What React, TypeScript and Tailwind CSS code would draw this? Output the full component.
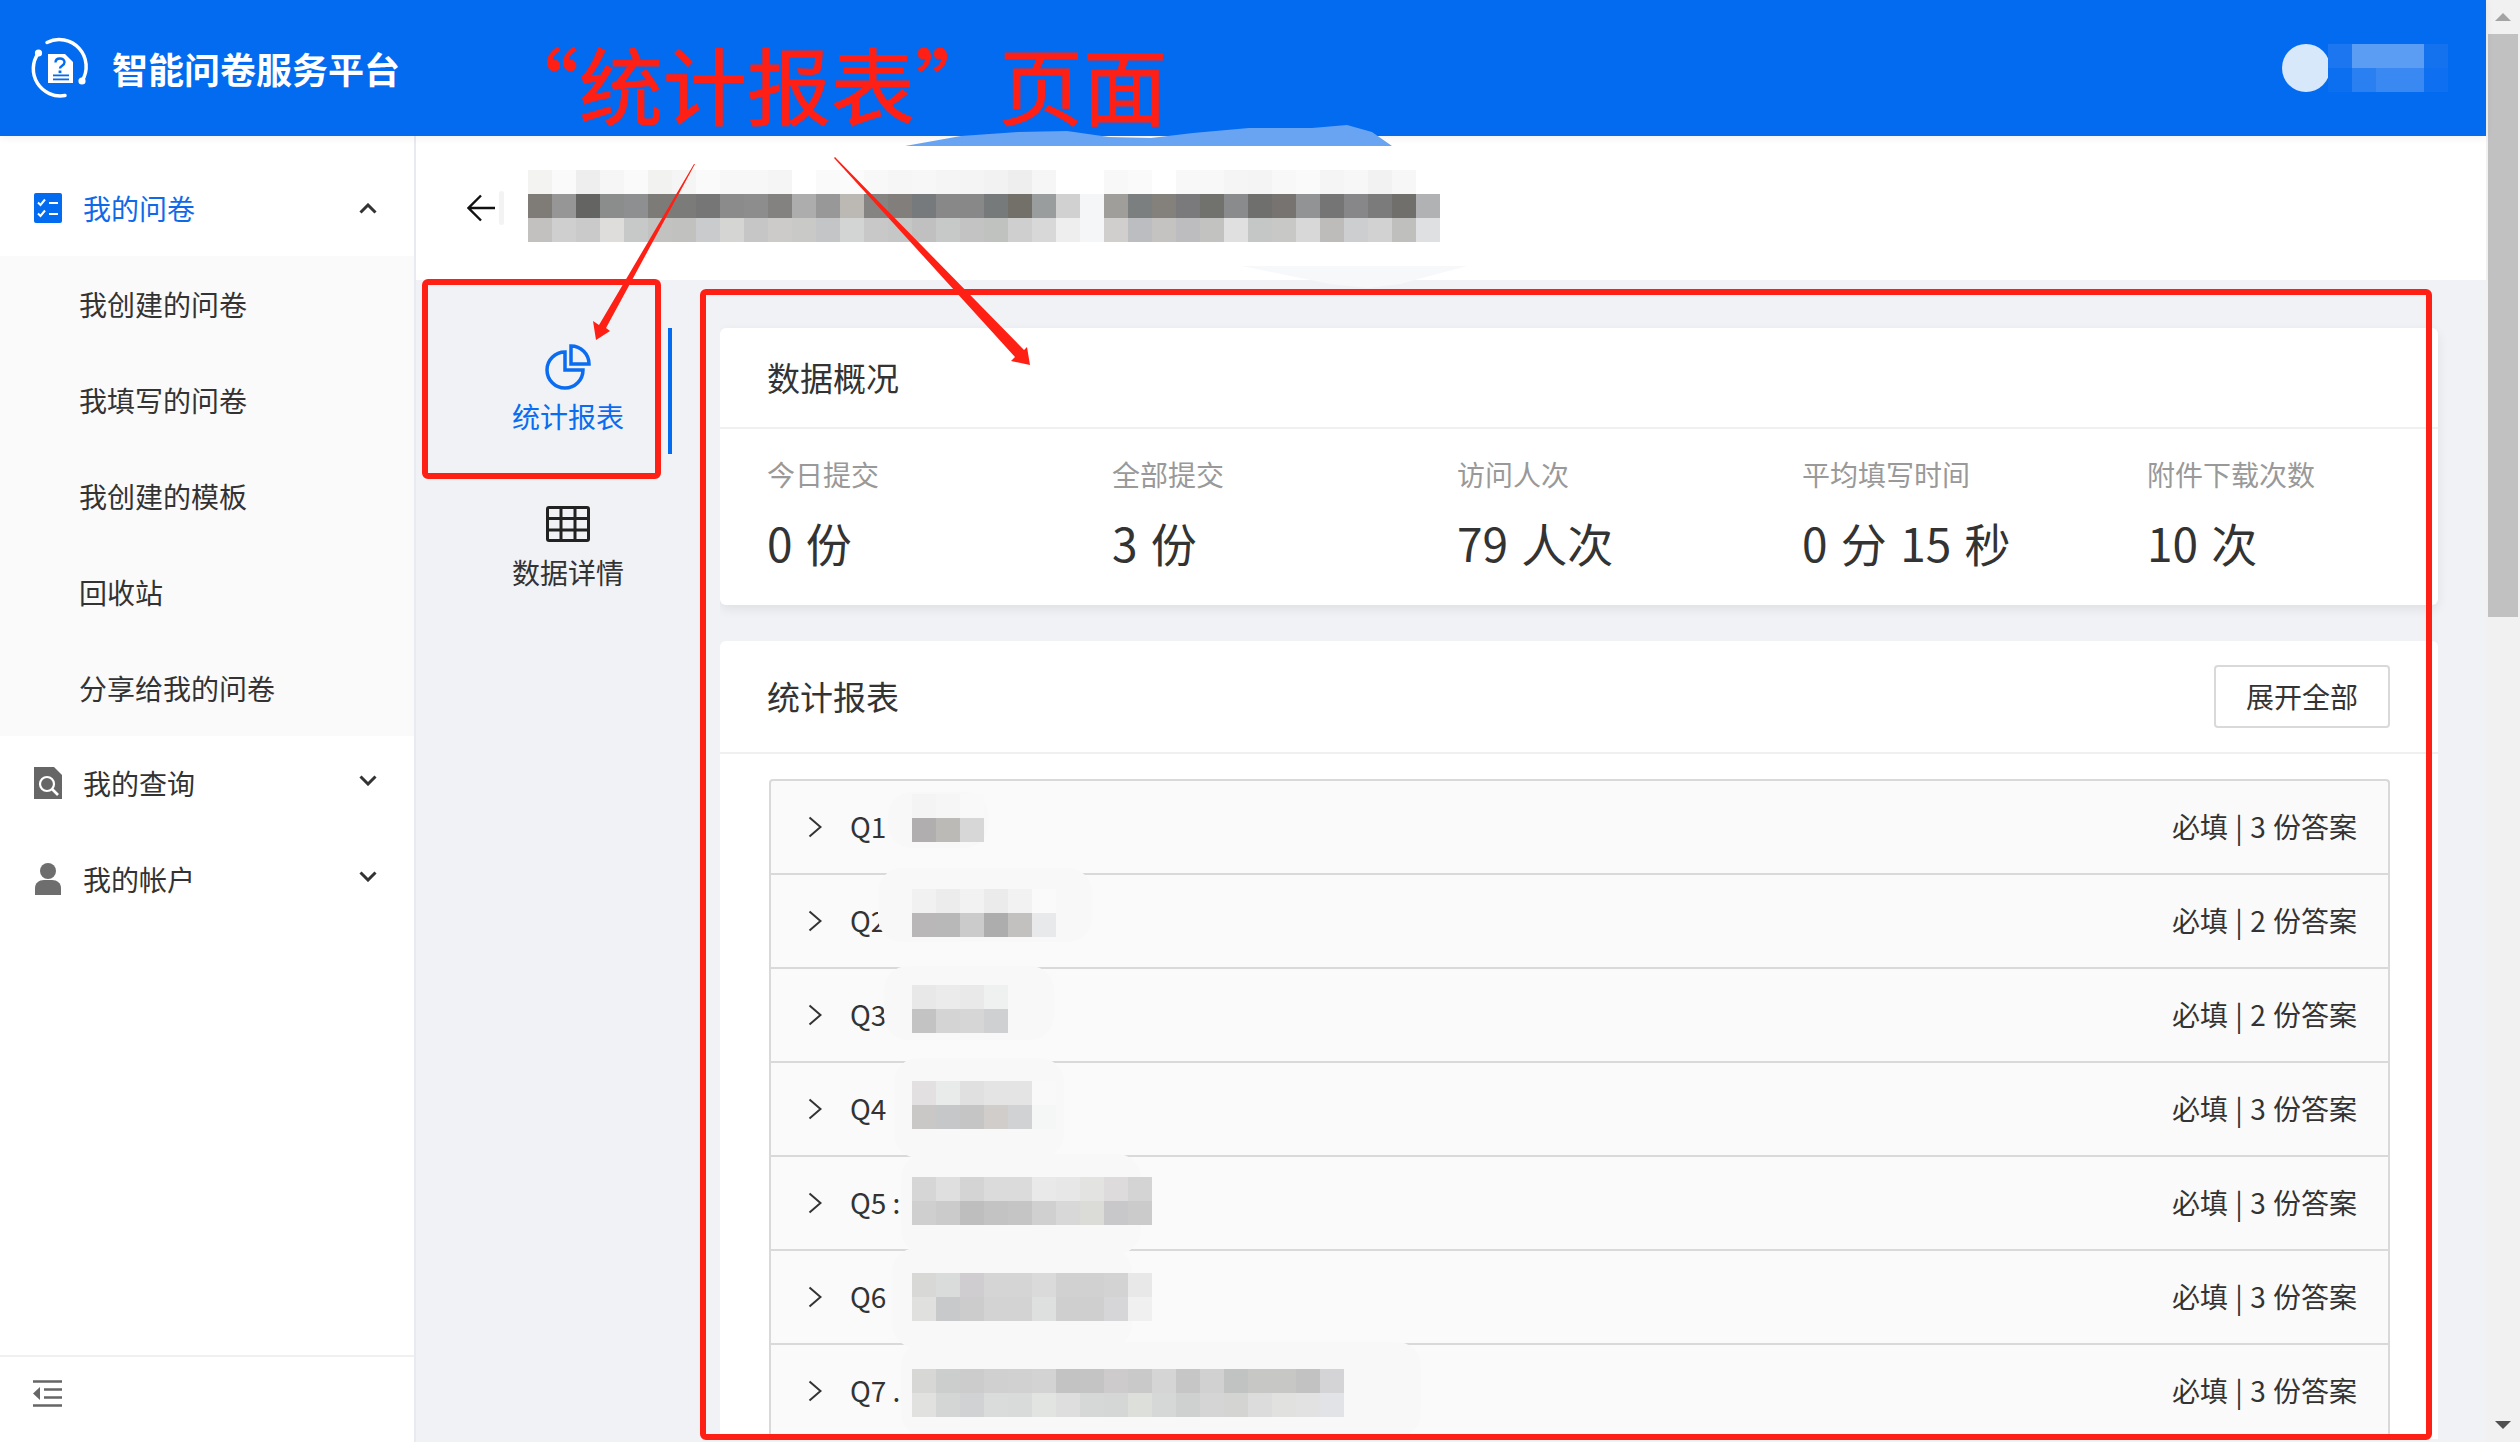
import React from 'react';

const titleMosaicA = [
  ['#f3f3f2', '#fafafa', '#eeeeee', '#f6f6f6', '#fafafa', '#f2f2f0', '#f5f5f5', '#fafafa', '#f7f7f7', '#f7f7f7', '#f5f5f5', '#ffffff', '#fafafa', '#fbfbfb', '#f8f8f8', '#f6f6f6', '#f7f7f7', '#f5f5f5', '#f3f4f3', '#f2f2f2', '#eeeeee', '#f6f6f6', '#ffffff'],
  ['#7f7b77', '#969696', '#646462', '#8b8c8c', '#8e8f90', '#7d7b78', '#7b7b79', '#767676', '#8b8b8c', '#8d8d8d', '#838280', '#adadad', '#989898', '#bcb9b4', '#858483', '#817e7c', '#777a7c', '#888888', '#888888', '#777a7a', '#727069', '#9a9d9d', '#d1d1d1'],
  ['#c3c1bf', '#cfcfcf', '#c9cac9', '#dfdddb', '#c7c8c8', '#c2c2c0', '#c1c1bf', '#c9cbcc', '#d5d5d3', '#c5c6c5', '#cdcbca', '#c9c9c7', '#c4c5c6', '#d3d5d5', '#c8c8c8', '#c4c7c6', '#c0c0c0', '#c7c8c8', '#c2c3c2', '#c0c2c0', '#cfcfcf', '#d8d8d8', '#eeeeee'],
];

const titleMosaicB = [
  ['#f8f8f8', '#fafafa', '#ffffff', '#f8f8f8', '#f8f8f8', '#f5f5f5', '#f4f4f4', '#f8f8f8', '#fafafa', '#f5f5f5', '#f7f7f7', '#f1f2f1', '#f7f7f7', '#ffffff'],
  ['#a09e9a', '#7c7f7f', '#84817d', '#7a7a7d', '#71716d', '#8a8b8d', '#6f6f6e', '#777370', '#929394', '#757575', '#87878a', '#7b7b7b', '#706f6b', '#b0b2b4'],
  ['#d0cfcd', '#bcbdc0', '#c5c3c2', '#bdbdc0', '#c2c3c1', '#e0e0e0', '#c5c7c6', '#c8c8c7', '#d8d8d8', '#bdbcba', '#cdced0', '#d2d2d2', '#bfbfbd', '#dee0e2'],
];

const userMosaic = [
  ['#1b76f0', '#5a9df3', '#5a9df3', '#5a9df3', '#1472ef'],
  ['#0c6ff0', '#2a7ff1', '#3a89f2', '#3a89f2', '#0e6ff0'],
];

const stats = [
  { label: '今日提交', value: '0 份' },
  { label: '全部提交', value: '3 份' },
  { label: '访问人次', value: '79 人次' },
  { label: '平均填写时间', value: '0 分 15 秒' },
  { label: '附件下载次数', value: '10 次' },
];

const questions = [
  {
    label: 'Q1', meta: '必填 | 3 份答案', blockTop: 15,
    blocks: [['#f4f4f4', '#f6f6f6', '#f9f9f9'], ['#b0aeae', '#bbbab7', '#d7d7d8']],
  },
  {
    label: 'Q2', meta: '必填 | 2 份答案', blockTop: 16,
    blocks: [['#f1f1f1', '#ececec', '#f2f2f2', '#ebebeb', '#f2f2f2', '#fafafa'], ['#b9b7b7', '#b8b8b9', '#cacbca', '#adadad', '#c2c1bf', '#e8e9ea']],
  },
  {
    label: 'Q3', meta: '必填 | 2 份答案', blockTop: 18,
    blocks: [['#e8e8e8', '#ebebeb', '#e9e9e9', '#eff0f0'], ['#c3c3c3', '#d4d4d4', '#d6d6d6', '#ced0d1']],
  },
  {
    label: 'Q4', meta: '必填 | 3 份答案', blockTop: 20,
    blocks: [['#e2e0e0', '#e9eaea', '#e0e0e0', '#e4e4e4', '#e3e4e3', '#f8f9f8'], ['#c9c8c6', '#c6c7c8', '#c6c5c5', '#d0cdcb', '#d1d2d3', '#f5f7f6']],
  },
  {
    label: 'Q5 :', meta: '必填 | 3 份答案', blockTop: 22,
    blocks: [['#d6d6d6', '#dfdfdf', '#d4d4d4', '#dbdbdb', '#dbdbdb', '#e9e9e9', '#e7e7e7', '#e3e3e2', '#dddbdc', '#d4d4d4'], ['#cfcfcf', '#cbcbcb', '#bebebe', '#c3c3c3', '#c5c5c5', '#d0d0d0', '#d8d8d8', '#dbdcd8', '#c8c8ca', '#cbcbcb']],
  },
  {
    label: 'Q6', meta: '必填 | 3 份答案', blockTop: 24,
    blocks: [['#d8d8d7', '#dadbdb', '#cfcdcf', '#d5d5d5', '#d5d5d5', '#d9dad9', '#d1d1d1', '#d1d1d1', '#d3d3d3', '#e8e8e8'], ['#e0e1df', '#c8c9cb', '#cccccc', '#d3d3d3', '#d3d3d3', '#dee0df', '#cfcfcf', '#cfcfcf', '#d6d6d8', '#f0f0f0']],
  },
  {
    label: 'Q7 .', meta: '必填 | 3 份答案', blockTop: 26,
    blocks: [['#d7d7d5', '#cccecd', '#cccccc', '#d0d0d0', '#d1d1d1', '#d2d3d2', '#c3c3c3', '#c4c4c4', '#cdcbcb', '#c9c9c9', '#d5d5d5', '#c5c6c5', '#d1d1d1', '#c0c3c1', '#c7c7c5', '#c7c7c5', '#c2c2c2', '#d4d4d7'], ['#e1e2e0', '#d4d6d6', '#d0d2d3', '#dadcdb', '#d9dada', '#e2e4e2', '#dedede', '#d6d7d7', '#d5d7d6', '#dddfda', '#d6d8d8', '#cfd0d0', '#d5d5d5', '#d4d5d3', '#dcdcdc', '#e1e2e0', '#e2e2e2', '#e2e3e6']],
  },
];

// erased patches on the list, relative to the list box
const smudges = [
  { left: 117, top: 11, width: 100, height: 56 },
  { left: 107, top: 87, width: 214, height: 74 },
  { left: 113, top: 185, width: 170, height: 74 },
  { left: 123, top: 277, width: 170, height: 100 },
  { left: 130, top: 373, width: 240, height: 100 },
  { left: 121, top: 467, width: 240, height: 100 },
  { left: 130, top: 561, width: 520, height: 95 },
];

const Mosaic = ({ rows }: { rows: string[][] }) => (
  <div className="flex flex-col">
    {rows.map((row, i) => (
      <div key={i} className="flex h-[24px]">
        {row.map((color, j) => (
          <div key={j} className="h-[24px] w-[24px]" style={{ backgroundColor: color }}></div>
        ))}
      </div>
    ))}
  </div>
);

const Chevron = ({ up }: { up?: boolean }) => (
  <svg width="18" height="11" viewBox="0 0 18 11" className={up ? 'text-[#333333]' : '-mt-[6px] text-[#333333]'}>
    <path d={up ? 'M1.5 9.5L9 2l7.5 7.5' : 'M1.5 1.5L9 9l7.5-7.5'} fill="none" stroke="currentColor" strokeWidth="3" />
  </svg>
);

const Logo = () => (
  <svg width="90" height="75" viewBox="0 0 90 75" className="shrink-0">
    <path d="M18.5 22A27 27 0 0 0 45 64.5" fill="none" stroke="#fff" strokeWidth="3.5" strokeLinecap="round" />
    <path d="M27 11.5A27 27 0 0 1 62 50" fill="none" stroke="#fff" strokeWidth="3.5" strokeLinecap="round" />
    <circle cx="18.5" cy="22" r="3.6" fill="#fff" />
    <circle cx="62" cy="50" r="3.6" fill="#fff" />
    <path d="M28 23h17l8 8v21H28z" fill="#fff" />
    <path d="M47 22.5l6 6" stroke="#026bf0" strokeWidth="1.5" />
    <path d="M35.5 31.5c0-2.6 2-4 4.5-4s4.5 1.500 4.500 3.800c0 3.500-4.500 3.200-4.500 6.200" fill="none" stroke="#026bf0" strokeWidth="2.4" />
    <rect x="38.600" y="39.500" width="2.800" height="2.600" fill="#026bf0" />
    <rect x="33" y="43.500" width="16" height="1.800" fill="#026bf0" />
    <rect x="33" y="47.500" width="16" height="1.800" fill="#026bf0" />
  </svg>
);

const SurveyIcon = () => (
  <svg width="28" height="30" viewBox="0 0 28 30" className="shrink-0">
    <rect width="28" height="30" rx="2" fill="#026bf0" />
    <path d="M4 9.500l2.500 2.500L11 6.500M4 20.500l2.500 2.500L11 17.500" fill="none" stroke="#fff" strokeWidth="2" />
    <path d="M15 10h9M15 21h9" stroke="#fff" strokeWidth="2" />
  </svg>
);

const QueryIcon = () => (
  <svg width="28" height="32" viewBox="0 0 28 32" className="shrink-0">
    <path d="M0 0h20l8 8v24H0z" fill="#666666" />
    <circle cx="13" cy="17" r="7" fill="none" stroke="#fff" strokeWidth="2.200" />
    <path d="M18 22l6 6" stroke="#fff" strokeWidth="2.600" />
  </svg>
);

const UserIcon = () => (
  <svg width="28" height="32" viewBox="0 0 28 32" className="shrink-0">
    <circle cx="14" cy="8" r="8" fill="#6e6e6e" />
    <path d="M1 32v-7c0-5 4-8 9-8h8c5 0 9 3 9 8v7z" fill="#6e6e6e" />
  </svg>
);

const CollapseIcon = () => (
  <svg width="30" height="27" viewBox="0 0 30 27">
    <path d="M0 1.500h29M11 9.500h18M11 17.500h18M0 25.500h29" stroke="#666666" strokeWidth="2.400" />
    <path d="M7 7v13L0 13.500z" fill="#666666" />
  </svg>
);

const PieIcon = () => (
  <svg width="56" height="52" viewBox="0 0 56 52">
    <path d="M25 10A18 18 0 1 0 43 28H25z" fill="none" stroke="#0a6cf0" strokeWidth="3.500" />
    <path d="M31 4A18 18 0 0 1 49 22H31z" fill="none" stroke="#0a6cf0" strokeWidth="3.500" />
  </svg>
);

const TableIcon = () => (
  <svg width="44" height="36" viewBox="0 0 44 36">
    <rect x="1.500" y="1.500" width="41" height="33" rx="1.500" fill="none" stroke="#222222" strokeWidth="3" />
    <path d="M15 1v34M29 1v34M1 12.500h42M1 24h42" stroke="#222222" strokeWidth="3" />
  </svg>
);

const App: React.FC = () => {
  return (
    <div className="relative flex h-screen w-screen overflow-hidden bg-[#f0f2f6] font-['Noto_Sans_CJK_SC','Liberation_Sans',sans-serif] text-[28px] text-[#333333]">
      <div className="flex min-w-0 flex-1 flex-col">
        {/* Top bar */}
        <header className="relative z-10 flex h-[136px] shrink-0 items-center justify-between bg-[#026bf0] pl-[20px] pr-[38px] shadow-[0_2px_8px_rgba(0,0,0,0.06)]">
          <div className="flex items-center">
            <Logo />
            <span className="ml-[2px] text-[36px] font-bold leading-none text-white">智能问卷服务平台</span>
          </div>
          <div className="flex items-center">
            <div className="h-[48px] w-[48px] rounded-full bg-[#d8e8fb]"></div>
            <div className="-ml-[2px]">
              <Mosaic rows={userMosaic} />
            </div>
          </div>
        </header>

        <div className="flex min-h-0 flex-1">
          {/* Sidebar */}
          <aside className="flex w-[416px] shrink-0 flex-col border-r-2 border-[#e8eaf0] bg-white">
            <div className="flex-1 pt-[24px]">
              <div className="flex h-[96px] items-center pl-[34px] pr-[37px]">
                <SurveyIcon />
                <span className="ml-[21px] flex-1 text-[#0f6ae8]">我的问卷</span>
                <Chevron up />
              </div>
              <div className="bg-[#fafafa]">
                {['我创建的问卷', '我填写的问卷', '我创建的模板', '回收站', '分享给我的问卷'].map((item) => (
                  <div key={item} className="flex h-[96px] items-center pl-[79px]">{item}</div>
                ))}
              </div>
              <div className="flex h-[96px] items-center pb-[2px] pl-[34px] pr-[37px]">
                <QueryIcon />
                <span className="ml-[21px] flex-1">我的查询</span>
                <Chevron />
              </div>
              <div className="flex h-[96px] items-center pb-[2px] pl-[34px] pr-[37px]">
                <UserIcon />
                <span className="ml-[21px] flex-1">我的帐户</span>
                <Chevron />
              </div>
            </div>
            <div className="flex h-[87px] items-center border-t-2 border-[#f0f0f0] pb-[12px] pl-[33px]">
              <CollapseIcon />
            </div>
          </aside>

          <main className="flex min-w-0 flex-1 flex-col">
            {/* Survey title */}
            <div className="flex h-[144px] shrink-0 items-center bg-white pl-[51px]">
              <svg width="28" height="28" viewBox="0 0 28 28" className="shrink-0">
                <path d="M14 1.500L1.500 14 14 26.500M2 14h26" fill="none" stroke="#111111" strokeWidth="2.400" />
              </svg>
              <div className="ml-[4px] h-[34px] w-[5px] rounded-full bg-[#f3f3f3]"></div>
              <div className="ml-[24px] mt-[-4px] flex">
                <Mosaic rows={titleMosaicA} />
                <div className="mt-[24px] h-[48px] w-[24px] bg-[#f4f6f8]"></div>
                <Mosaic rows={titleMosaicB} />
              </div>
            </div>

            <div className="flex min-h-0 flex-1">
              {/* Report tabs */}
              <nav className="w-[304px] shrink-0 pl-[52px] pr-[48px] pt-[48px]">
                <div className="flex h-[126px] flex-col items-center border-r-4 border-[#026bf0] pt-[14px] text-[#0a6cf0]">
                  <PieIcon />
                  <span className="mt-[2px] leading-[40px]">统计报表</span>
                </div>
                <div className="mt-[31px] flex h-[126px] flex-col items-center pr-[4px] pt-[21px]">
                  <TableIcon />
                  <span className="mt-[10px] leading-[40px]">数据详情</span>
                </div>
              </nav>

              <div className="flex min-w-0 flex-1 flex-col gap-[36px] overflow-hidden pr-[48px] pt-[48px]">
                {/* Overview card */}
                <section className="shrink-0 rounded-[6px] bg-white shadow-[0_4px_12px_rgba(0,0,0,0.08)]">
                  <div className="flex h-[101px] items-center border-b-2 border-[#f0f0f0] pl-[47px] text-[33px]">数据概况</div>
                  <div className="flex h-[176px] pl-[47px] pt-[25px]">
                    {stats.map((stat) => (
                      <div key={stat.label} className="w-[345px] shrink-0">
                        <div className="leading-[40px] text-[#999999]">{stat.label}</div>
                        <div className="mt-[18px] whitespace-nowrap text-[46px] leading-[60px] [word-spacing:3px]">{stat.value}</div>
                      </div>
                    ))}
                  </div>
                </section>

                {/* Report card */}
                <section className="shrink-0 rounded-t-[6px] bg-white">
                  <div className="flex h-[113px] items-center justify-between border-b-2 border-[#f0f0f0] pl-[47px] pr-[48px]">
                    <span className="text-[33px]">统计报表</span>
                    <button className="flex h-[63px] w-[176px] items-center justify-center rounded-[4px] border-2 border-[#d9d9d9] bg-white pb-[2px]">展开全部</button>
                  </div>
                  <div className="pl-[49px] pr-[48px] pt-[25px]">
                    <div className="relative rounded-t-[4px] border-2 border-b-0 border-[#d9d9d9] bg-[#fafafa]">
                      {questions.map((q) => (
                        <div key={q.label} className="flex h-[94px] items-center border-b-2 border-[#d9d9d9] pb-[2px] pl-[37px] pr-[31px]">
                          <svg width="14" height="22" viewBox="0 0 14 22" className="mt-[2px] shrink-0 text-[#333333]">
                            <path d="M1.500 1.500L12.500 11 1.500 20.500" fill="none" stroke="currentColor" strokeWidth="2" />
                          </svg>
                          <span className="ml-[28px] flex-1">{q.label}</span>
                          <span className="[word-spacing:1px]">{q.meta}</span>
                        </div>
                      ))}
                      {smudges.map((s, i) => (
                        <div key={i} className="absolute rounded-[24px] bg-[#f8f8f8]" style={s}></div>
                      ))}
                      {questions.map((q, i) => (
                        <div key={q.label} className="absolute left-[141px]" style={{ top: i * 94 + q.blockTop - 2 }}>
                          <Mosaic rows={q.blocks} />
                        </div>
                      ))}
                    </div>
                  </div>
                </section>
              </div>
            </div>
          </main>
        </div>
      </div>

      {/* Page scrollbar */}
      <div className="flex w-[34px] shrink-0 flex-col items-center bg-[#f1f1f1]">
        <div className="flex h-[34px] items-center justify-center">
          <div className="h-0 w-0 border-x-[8px] border-b-[8px] border-x-transparent border-b-[#a3a3a3]"></div>
        </div>
        <div className="h-[583px] w-[30px] bg-[#c1c1c1]"></div>
        <div className="mt-auto flex h-[34px] items-center justify-center">
          <div className="h-0 w-0 border-x-[8px] border-t-[8px] border-x-transparent border-t-[#505050]"></div>
        </div>
      </div>

      {/* Red annotations drawn over the screenshot */}
      <div className="pointer-events-none absolute left-[495px] top-[38px] z-20 whitespace-nowrap text-[84px] leading-[90px] text-[#ff2015] [-webkit-text-stroke:1px_#ff2015]">“统计报表”页面</div>
      <div className="pointer-events-none absolute left-[422px] top-[279px] z-20 h-[200px] w-[239px] rounded-[6px] border-[6px] border-[#ff2015]"></div>
      <div className="pointer-events-none absolute left-[700px] top-[289px] z-20 h-[1151px] w-[1732px] rounded-[6px] border-[6px] border-[#ff2015]"></div>
      <svg className="pointer-events-none absolute left-0 top-0 z-20" width="2520" height="1442" viewBox="0 0 2520 1442">
        <path d="M905 146L961 136 1018 132 1067 131 1109 137 1151 138 1193 133 1249 128 1312 128 1347 125 1372 132 1392 146z" fill="#69a4f2" />
        <path d="M1242 266L1467 266 1400 284 1368 288 1330 284z" fill="#f7f8fa" />
        <path d="M695 164L606 328 610 331 596 340 593 321 599 325 694 164z" fill="#ff2015" />
        <path d="M835 157L1024 350 1027 347 1030 365 1011 361 1015 357 834 158z" fill="#ff2015" />
      </svg>
    </div>
  );
};

export default App;
